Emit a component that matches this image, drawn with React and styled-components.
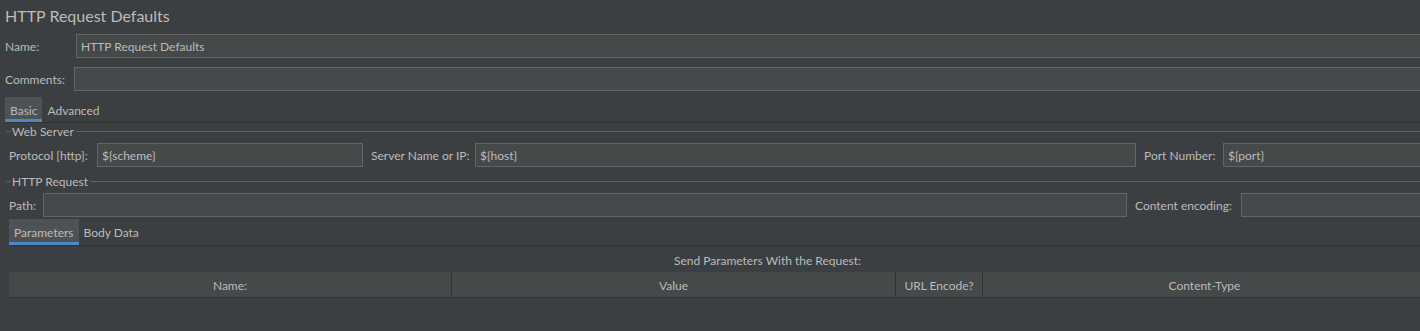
import React from 'react';
import styled, { createGlobalStyle } from 'styled-components';

const GlobalStyle = createGlobalStyle`
  html, body {
    margin: 0;
    padding: 0;
    background: #3c3f41;
    overflow: hidden;
  }
  body {
    font-family: Lato, "Noto Sans", sans-serif;
    font-size: 12px;
    color: #bbbbbb;
  }
`;

const Page = styled.div`
  width: 1426px;
  height: 331px;
  display: flex;
  flex-direction: column;
`;

const Title = styled.div`
  height: 34px;
  display: flex;
  align-items: center;
  padding-left: 5px;
  padding-bottom: 4px;
  box-sizing: border-box;
  font-size: 16px;
`;

const Row = styled.div`
  display: flex;
  align-items: center;
  padding-left: ${props => props.indent || 0}px;
  margin-top: ${props => props.top || 0}px;
`;

const Label = styled.label`
  flex: none;
  width: ${props => props.width}px;
  white-space: nowrap;
  margin-left: ${props => props.gap || 0}px;
`;

const Field = styled.div`
  box-sizing: border-box;
  height: 24px;
  background: #45494a;
  border: 1px solid #646464;
  padding: 0 4px;
  display: flex;
  align-items: center;
  white-space: nowrap;
  flex: ${props => (props.width ? 'none' : '1')};
  width: ${props => (props.width ? `${props.width}px` : 'auto')};
`;

const TabBar = styled.div`
  display: flex;
  margin-left: ${props => props.indent || 0}px;
  margin-top: ${props => props.top || 0}px;
  border-bottom: 1px solid #323232;
`;

const Tab = styled.div`
  height: ${props => props.height}px;
  padding: 0 5px;
  display: flex;
  align-items: center;
  box-sizing: border-box;
  padding-top: 1px;
  background: ${props => (props.selected ? '#4e5254' : 'transparent')};
  box-shadow: ${props => (props.selected ? 'inset 0 -3px 0 #4a88c7' : 'none')};
`;

const Titled = styled.div`
  display: flex;
  align-items: center;
  height: 16px;
  margin-top: ${props => props.top || 0}px;
  padding-left: 6px;

  &::before {
    content: '';
    width: 5px;
    border-top: 1px solid #5e6163;
    margin-right: 1px;
  }

  &::after {
    content: '';
    flex: 1;
    border-top: 1px solid #5e6163;
    margin-left: 2px;
  }
`;

const Caption = styled.div`
  margin-top: 5px;
  margin-left: 9px;
  padding-left: 100px;
  height: 18px;
  display: flex;
  align-items: center;
  justify-content: center;
`;

const TableHeader = styled.div`
  margin-left: 9px;
  margin-top: 3px;
  height: 26px;
  box-sizing: border-box;
  display: flex;
  background: #45494a;
  border-bottom: 1px solid #323232;
`;

const HeadCell = styled.div`
  box-sizing: border-box;
  display: flex;
  align-items: center;
  justify-content: center;
  padding-top: 1px;
  flex: ${props => (props.width ? 'none' : '1')};
  width: ${props => (props.width ? `${props.width}px` : 'auto')};
  border-right: ${props => (props.last ? 'none' : '1px solid #323232')};
`;

const App = () => (
  <Page>
    <GlobalStyle />
    <Title>HTTP Request Defaults</Title>

    <Row indent={5}>
      <Label width={71}>Name:</Label>
      <Field>HTTP Request Defaults</Field>
    </Row>
    <Row indent={5} top={9}>
      <Label width={69}>Comments:</Label>
      <Field />
    </Row>

    <TabBar indent={5} top={6}>
      <Tab height={25} selected>Basic</Tab>
      <Tab height={25}>Advanced</Tab>
    </TabBar>

    <Titled>Web Server</Titled>
    <Row indent={9} top={4}>
      <Label width={88}>Protocol [http]:</Label>
      <Field width={266}>${'{scheme}'}</Field>
      <Label width={104} gap={8}>Server Name or IP:</Label>
      <Field>${'{host}'}</Field>
      <Label width={79} gap={8}>Port Number:</Label>
      <Field width={203}>${'{port}'}</Field>
    </Row>

    <Titled top={6}>HTTP Request</Titled>
    <Row indent={9} top={4}>
      <Label width={34}>Path:</Label>
      <Field />
      <Label width={106} gap={8}>Content encoding:</Label>
      <Field width={185} />
    </Row>

    <TabBar indent={9} top={2}>
      <Tab height={26} selected>Parameters</Tab>
      <Tab height={26}>Body Data</Tab>
    </TabBar>

    <Caption>Send Parameters With the Request:</Caption>
    <TableHeader>
      <HeadCell width={443}>Name:</HeadCell>
      <HeadCell width={444}>Value</HeadCell>
      <HeadCell width={87}>URL Encode?</HeadCell>
      <HeadCell last>Content-Type</HeadCell>
    </TableHeader>
  </Page>
);

export default App;
